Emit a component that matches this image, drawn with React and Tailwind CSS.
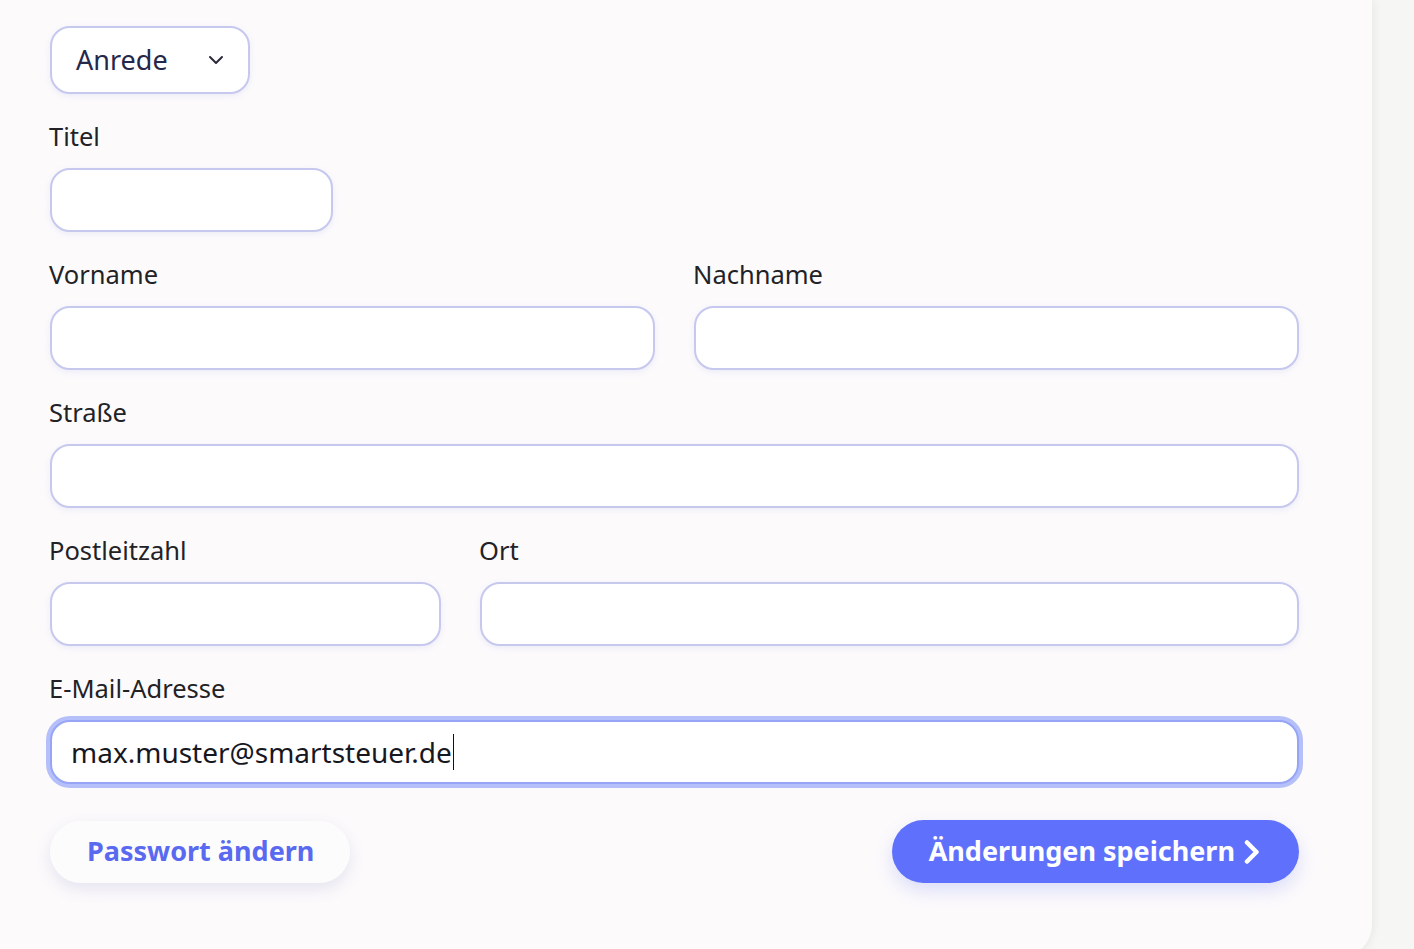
import { ChevronDown } from 'lucide-react'

const FONT = { fontFamily: '"Noto Sans", Lato, sans-serif' }

function Label({ children }) {
  return <div className="-ml-px text-[25.5px] leading-[26px] text-[#222226] mb-[19px]">{children}</div>
}

function Field({ label, className = '' }) {
  return (
    <div className={`flex flex-col ${className}`}>
      <Label>{label}</Label>
      <input
        type="text"
        className="h-[64px] w-full rounded-[20px] border-2 border-[#c6c8ee] bg-white px-5 text-[28px] outline-none shadow-[0_2px_6px_rgba(120,130,220,0.12)]"
      />
    </div>
  )
}

export default function App() {
  return (
    <div className="min-h-screen bg-[#f6f6f5] overflow-hidden" style={FONT}>
      <div className="w-[1372px] bg-[#fcfafb] rounded-br-[32px] shadow-[2px_0_10px_rgba(0,0,0,0.06)] pt-[26px] pb-[74px] pl-[50px] pr-[73px]">
        <div className="flex flex-col gap-[29px]">
          {/* Anrede select */}
          <div className="flex h-[68px] w-[200px] items-center justify-between rounded-[20px] border-2 border-[#c6c8ee] bg-white pl-[24px] pr-[20px] shadow-[0_2px_6px_rgba(120,130,220,0.12)]">
            <span className="text-[27px] text-[#25284a]">Anrede</span>
            <ChevronDown size={24} strokeWidth={2} className="text-[#2a2a3a]" />
          </div>

          <Field label="Titel" className="w-[283px]" />

          <div className="grid grid-cols-2 gap-[39px]">
            <Field label="Vorname" />
            <Field label="Nachname" />
          </div>

          <Field label="Straße" />

          <div className="flex gap-[39px]">
            <Field label="Postleitzahl" className="w-[391px] shrink-0" />
            <Field label="Ort" className="flex-1" />
          </div>

          <div className="flex flex-col">
            <Label>E-Mail-Adresse</Label>
            <div className="flex h-[64px] items-center rounded-[20px] border-2 border-[#97a5f6] bg-white pl-[19px] ring-4 ring-[#b5bffa]">
              <span className="text-[28px] text-[#17171f]">max.muster@smartsteuer.de</span>
              <span className="ml-px h-[36px] w-px bg-[#111]" />
            </div>
          </div>
        </div>

        <div className="mt-[36px] flex items-center justify-between">
          <button className="h-[62px] rounded-full bg-[#fdfcfd] pl-[37px] pr-[36px] text-[27px] font-bold text-[#5a6af0] shadow-[0_6px_16px_rgba(90,100,180,0.14)]">
            Passwort ändern
          </button>
          <button className="flex h-[63px] items-center gap-2 rounded-full bg-[#5f71fc] pl-[37px] pr-[38px] text-[27px] font-bold text-white shadow-[0_8px_18px_rgba(95,113,252,0.2)]">
            Änderungen speichern
            <svg width="18" height="24" viewBox="0 0 18 24" fill="none">
              <path d="M4 2.5l9.5 9.5-9.5 9.5" stroke="white" strokeWidth="4.5" strokeLinecap="round" strokeLinejoin="round" />
            </svg>
          </button>
        </div>
      </div>
    </div>
  )
}
